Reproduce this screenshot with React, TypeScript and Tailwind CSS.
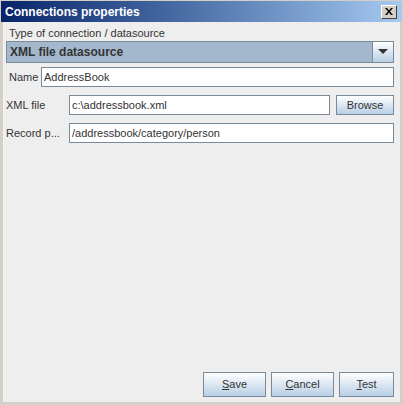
import React from "react";

const font = "font-['Liberation_Sans',Arial,sans-serif]";

const Btn = ({ label, u, w }: { label: string; u?: number; w: string }) => (
  <button
    className={`${w} border border-[#7a8a99] bg-gradient-to-b from-[#ffffff] to-[#b8cfe5] text-[11px] text-[#333333] ${font}`}
  >
    {u === undefined ? (
      label
    ) : (
      <>
        {label.slice(0, u)}
        <span className="underline">{label[u]}</span>
        {label.slice(u + 1)}
      </>
    )}
  </button>
);

const Field = ({ value, className }: { value: string; className: string }) => (
  <div
    className={`h-[20px] border border-[#7a8a99] bg-white pl-[2px] flex items-center text-[11px] text-[#333333] ${className}`}
  >
    {value}
  </div>
);

export default function App() {
  return (
    <div className={`w-[403px] h-[405px] flex flex-col bg-[#d4d0c8] ${font}`}>
      {/* title bar */}
      <div className="h-[21px] mx-[1px] mt-[1px] flex items-center justify-between bg-gradient-to-r from-[#0a246a] to-[#a6caf0] pl-[4px] pr-[5px]">
        <span className="text-white font-bold text-[12px]">Connections properties</span>
        <div className="w-[16px] h-[14px] bg-[#d4d0c8] border border-t-white border-l-white border-r-[#404040] border-b-[#404040] flex items-center justify-center">
          <svg width="8" height="7" viewBox="0 0 8 7">
            <path d="M0 0h2l2 2.5L6 0h2L5 3.5 8 7H6L4 4.5 2 7H0l3-3.5z" fill="#000" />
          </svg>
        </div>
      </div>
      {/* body */}
      <div className="flex-1 ml-[3px] mr-[3px] mb-[3px] border-l border-[#f4f4f4] bg-[#eeeeee] flex flex-col pl-[2px] pr-[6px] pt-[3px] pb-[5px]">
        <div className="text-[11px] text-[#333333] pl-[3px] h-[16px] leading-[16px]">
          Type of connection / datasource
        </div>
        <div className="h-[22px] mt-[0px] flex border border-[#7a8a99] bg-[#a3b8cc]">
          <div className="flex-1 flex items-center pl-[3px] font-bold text-[12px] text-[#333333]">
            XML file datasource
          </div>
          <div className="w-[21px] border-l border-[#7a8a99] bg-gradient-to-b from-[#ffffff] to-[#b8cfe5] flex items-center justify-center">
            <svg width="10" height="6" viewBox="0 0 10 6">
              <path d="M0 0h10L5 5z" fill="#333333" />
            </svg>
          </div>
        </div>
        <div className="flex items-center h-[20px] mt-[4px] pl-[3px]">
          <span className="w-[32px] text-[11px] text-[#333333]">Name</span>
          <Field value="AddressBook" className="flex-1" />
        </div>
        <div className="flex items-center h-[20px] mt-[8px]">
          <span className="w-[63px] text-[11px] text-[#333333]">XML file</span>
          <Field value="c:\addressbook.xml" className="w-[261px]" />
          <Btn label="Browse" w="ml-[6px] flex-1 h-[20px]" />
        </div>
        <div className="flex items-center h-[20px] mt-[8px]">
          <span className="w-[63px] text-[11px] text-[#333333]">Record p...</span>
          <Field value="/addressbook/category/person" className="flex-1" />
        </div>
        <div className="flex-1" />
        <div className="flex justify-end gap-[5px] pr-[0px]">
          <Btn label="Save" u={0} w="w-[63px] h-[25px]" />
          <Btn label="Cancel" u={0} w="w-[63px] h-[25px]" />
          <Btn label="Test" u={0} w="w-[55px] h-[25px]" />
        </div>
      </div>
    </div>
  );
}
